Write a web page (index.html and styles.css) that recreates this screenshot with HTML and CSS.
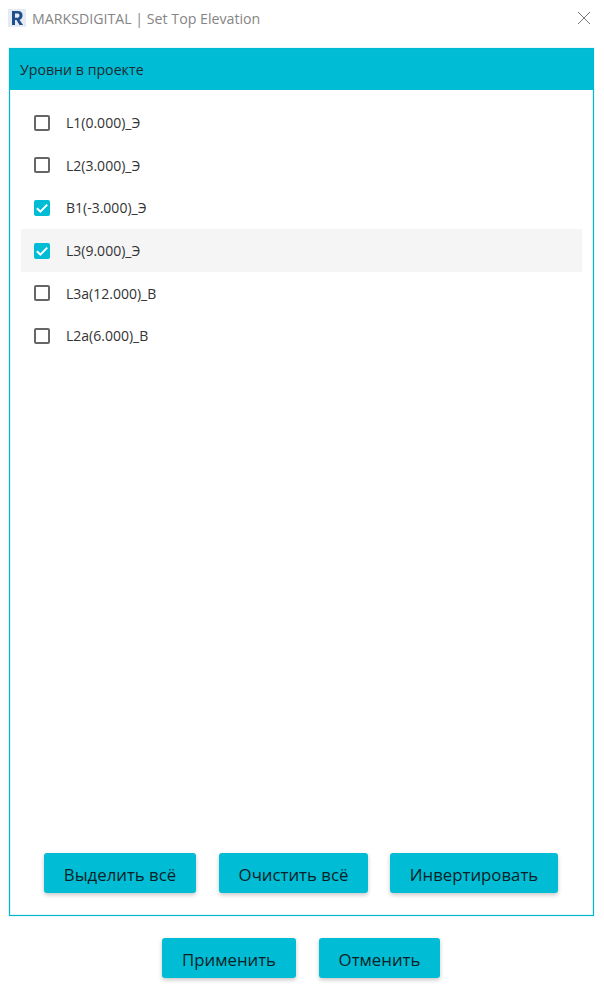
FILE: index.html
```html
<!DOCTYPE html>
<html lang="ru">
<head>
    <meta charset="UTF-8">
    <title>MARKSDIGITAL | Set Top Elevation</title>
    <link rel="stylesheet" href="styles.css">
</head>
<body>
    <div class="titlebar">
        <svg class="app-icon" width="18" height="18" viewBox="0 0 18 18">
            <rect width="18" height="18" fill="#e6ebf3"/>
            <path d="M4 2 H10 Q14.5 2 14.5 6.5 Q14.5 10 11.5 10.8 L15 16 H11.5 L8.5 11 H7 V16 H4 Z M7 4.5 V8.7 H9.8 Q11.5 8.7 11.5 6.6 Q11.5 4.5 9.8 4.5 Z" fill="#1f4e8c" fill-rule="evenodd"/>
        </svg>
        <span class="title">MARKSDIGITAL | Set Top Elevation</span>
        <svg class="close" width="14" height="14" viewBox="0 0 14 14">
            <path d="M1 1 L13 13 M13 1 L1 13" stroke="#666" stroke-width="0.9" fill="none"/>
        </svg>
    </div>

    <div class="panel">
        <div class="panel-header">Уровни в проекте</div>
        <div class="level-list">
            <div class="level"><span class="box"></span><span>L1(0.000)_Э</span></div>
            <div class="level"><span class="box"></span><span>L2(3.000)_Э</span></div>
            <div class="level">
                <span class="box checked"><svg width="18" height="18" viewBox="0 0 18 18"><path d="M3.8 9.2 L7.4 12.6 L14.2 5.6" stroke="#fff" stroke-width="2" fill="none"/></svg></span>
                <span>B1(-3.000)_Э</span>
            </div>
            <div class="level hover">
                <span class="box checked"><svg width="18" height="18" viewBox="0 0 18 18"><path d="M3.8 9.2 L7.4 12.6 L14.2 5.6" stroke="#fff" stroke-width="2" fill="none"/></svg></span>
                <span>L3(9.000)_Э</span>
            </div>
            <div class="level"><span class="box"></span><span>L3a(12.000)_B</span></div>
            <div class="level"><span class="box"></span><span>L2a(6.000)_B</span></div>
        </div>
        <div class="panel-buttons">
            <button class="btn btn-select">Выделить всё</button>
            <button class="btn btn-clear">Очистить всё</button>
            <button class="btn btn-invert">Инвертировать</button>
        </div>
    </div>

    <div class="footer">
        <button class="btn btn-apply">Применить</button>
        <button class="btn btn-cancel">Отменить</button>
    </div>
</body>
</html>
```

FILE: styles.css
```css
html, body {
    height: 100%;
    margin: 0;
}

body {
    display: flex;
    flex-direction: column;
    background-color: #fff;
    font-family: "Open Sans", "Noto Sans", sans-serif;
    color: #2b2b2b;
    overflow: hidden;
}

.titlebar {
    height: 36px;
    display: flex;
    align-items: center;
    padding: 0 13px 0 8px;
    flex-shrink: 0;
}

.app-icon {
    margin-right: 6px;
}

.title {
    font-size: 14.2px;
    color: #858585;
    flex-grow: 1;
}

.panel {
    height: 868px;
    margin: 12px 10px 0 9px;
    border: 1px solid #00b8d0;
    box-shadow: inset 0 0 0 1px #dcf6fa, 0 0 0 1px #e6f9fb;
    display: flex;
    flex-direction: column;
    box-sizing: border-box;
}

.panel-header {
    height: 41px;
    background-color: #00bcd4;
    display: flex;
    align-items: center;
    padding-left: 10px;
    font-size: 14.2px;
    color: #1c2b30;
}

.level-list {
    flex-grow: 1;
    padding: 11.5px 11px 0;
}

.level {
    height: 42.6px;
    display: flex;
    align-items: center;
    padding-left: 13px;
    gap: 15px;
    font-size: 14px;
    color: #333;
}

.hover {
    background-color: #f6f5f6;
}

.box {
    border: 2px solid #666;
    border-radius: 2px;
    width: 12px;
    height: 12px;
    margin-right: 1px;
}

.box.checked {
    width: 16px;
    height: 16px;
    border: none;
    background-color: #00bcd4;
    position: relative;
}

.box.checked svg {
    position: absolute;
    left: -1px;
    top: -1px;
}

.panel-buttons {
    display: flex;
    padding-left: 34px;
    margin-bottom: 22px;
}

.btn {
    height: 40px;
    border: none;
    border-radius: 3px;
    background-color: #00bcd4;
    font-family: "Open Sans", "Noto Sans", sans-serif;
    font-size: 16.8px;
    font-weight: 500;
    color: #0a1f26;
    padding: 2px 0 0;
    box-shadow: 0 2px 4px rgba(0, 0, 0, 0.22);
}

.btn-select { width: 152px; margin-right: 23px; }
.btn-clear { width: 149px; margin-right: 22px; }
.btn-invert { width: 168px; }
.btn-apply { width: 134px; margin-right: 23px; }
.btn-cancel { width: 121px; }

.footer {
    display: flex;
    padding: 22px 0 0 162px;
}
```
